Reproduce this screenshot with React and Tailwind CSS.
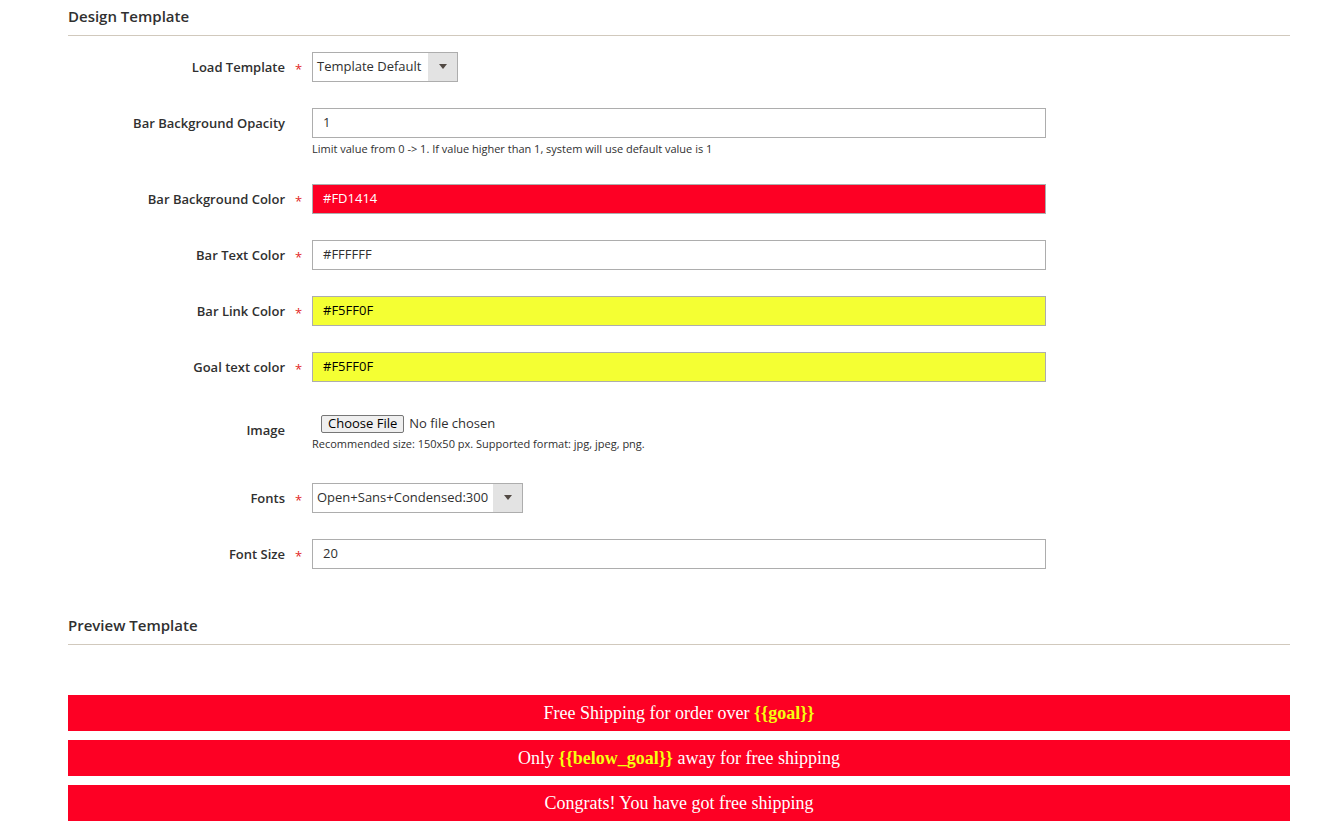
const font = { fontFamily: '"Open Sans", "Liberation Sans", sans-serif' }

function Row({ label, required, children, note, className = "" }) {
  return (
    <div className={`flex ${className}`}>
      <div className="w-[217px] shrink-0 text-right text-[13px] font-semibold text-[#303030] pt-[6px]">{label}</div>
      <div className="w-[27px] shrink-0 text-center text-[#e22626] text-[13px] pt-[8px]">{required ? "*" : ""}</div>
      <div className="flex flex-col">
        {children}
        {note && <div className="text-[11px] text-[#303030] mt-[3px]">{note}</div>}
      </div>
    </div>
  )
}

function Input({ value, bg = "bg-white", text = "text-[#303030]" }) {
  return (
    <div className={`w-[734px] h-[30px] border border-[#adadad] ${bg} ${text} text-[13px] px-[10px] flex items-center`}>{value}</div>
  )
}

function Select({ value, width }) {
  return (
    <div className={`${width} h-[30px] border border-[#adadad] bg-white text-[13px] text-[#303030] flex items-center`}>
      <span className="pl-[4px] flex-1">{value}</span>
      <span className="w-[29px] h-full bg-[#e3e3e3] flex items-center justify-center">
        <svg width="8" height="5" viewBox="0 0 8 5"><path d="M0 0h8L4 5z" fill="#514943" /></svg>
      </span>
    </div>
  )
}

export default function App() {
  const bar = "h-[36px] bg-[#fd0024] text-white text-[18px] flex items-center justify-center"
  return (
    <div className="bg-white w-[1317px] h-[833px] pl-[68px] pr-[27px] overflow-hidden" style={font}>
      <div className="pt-[5px] text-[15px] font-semibold text-[#303030] pb-[7px] border-b border-[#d1c9bd]">Design Template</div>
      <div className="pt-[16px]">
        <Row label="Load Template" required className="mb-[26px]"><Select value="Template Default" width="w-[146px]" /></Row>
        <Row label="Bar Background Opacity" className="mb-[27px]" note="Limit value from 0 -> 1. If value higher than 1, system will use default value is 1"><Input value="1" /></Row>
        <Row label="Bar Background Color" required className="mb-[26px]"><Input value="#FD1414" bg="bg-[#fd0024]" text="text-white" /></Row>
        <Row label="Bar Text Color" required className="mb-[26px]"><Input value="#FFFFFF" /></Row>
        <Row label="Bar Link Color" required className="mb-[26px]"><Input value="#F5FF0F" bg="bg-[#f4ff33]" text="text-black" /></Row>
        <Row label="Goal text color" required className="mb-[33px]"><Input value="#F5FF0F" bg="bg-[#f4ff33]" text="text-black" /></Row>
        <Row label="Image" className="mb-[30px]" note="Recommended size: 150x50 px. Supported format: jpg, jpeg, png.">
          <div className="flex items-center h-[18px] ml-[9px] text-[13px]">
            <span className="border border-[#767676] bg-[#efefef] rounded-[2px] px-[6px] h-[18px] flex items-center text-black">Choose File</span>
            <span className="ml-[5px] text-[#303030]">No file chosen</span>
          </div>
        </Row>
        <Row label="Fonts" required className="mb-[26px]"><Select value="Open+Sans+Condensed:300" width="w-[211px]" /></Row>
        <Row label="Font Size" required><Input value="20" /></Row>
      </div>
      <div className="mt-[45px] text-[15px] font-semibold text-[#303030] pb-[8px] border-b border-[#d1c9bd]">Preview Template</div>
      <div className="mt-[50px] flex flex-col gap-[9px]" style={{ fontFamily: '"Liberation Serif", serif' }}>
        <div className={bar}>Free Shipping for order over&nbsp;<b className="text-[#f5ff0f]">{"{{goal}}"}</b></div>
        <div className={bar}>Only&nbsp;<b className="text-[#f5ff0f]">{"{{below_goal}}"}</b>&nbsp;away for free shipping</div>
        <div className={bar}>Congrats! You have got free shipping</div>
      </div>
    </div>
  )
}
